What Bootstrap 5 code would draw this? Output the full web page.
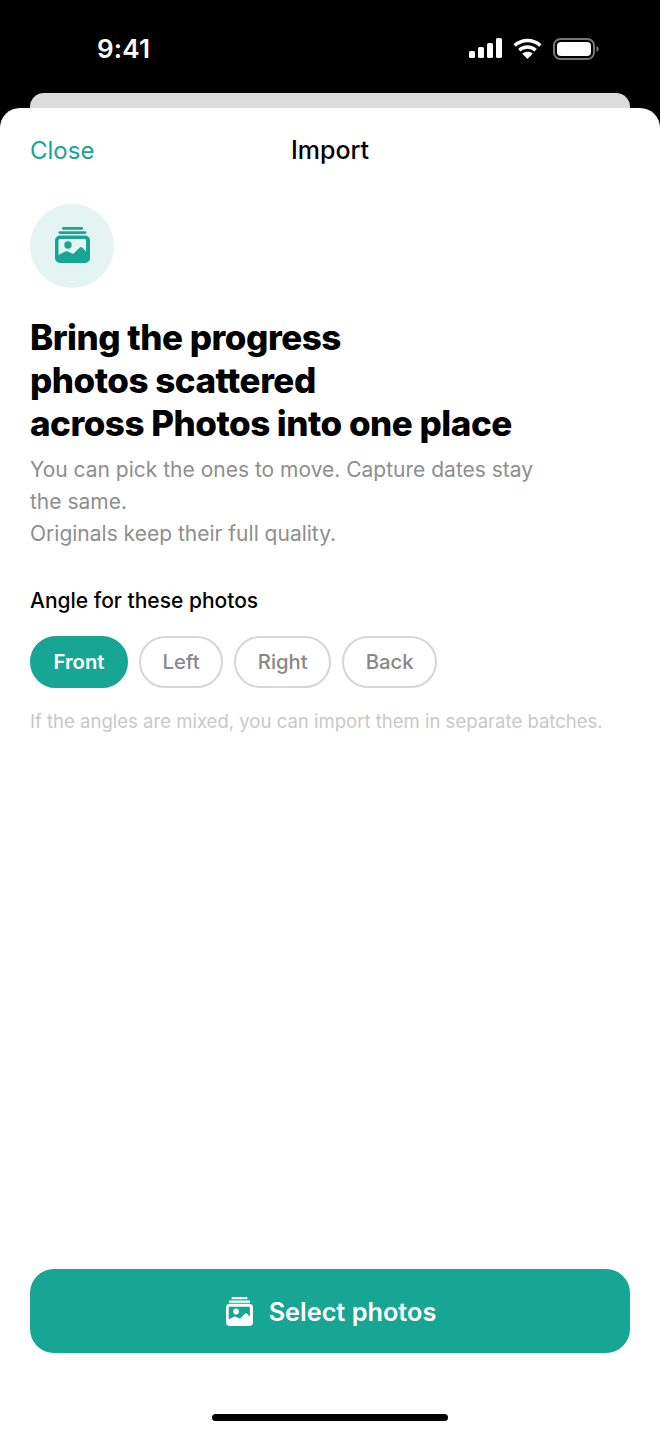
<!DOCTYPE html>
<html lang="en"><head><meta charset="utf-8"><title>Import</title>
<link rel="stylesheet" href="https://cdn.jsdelivr.net/npm/bootstrap@5.3.0/dist/css/bootstrap.min.css">
<style>
html,body{height:1434px;background:#000;font-family:Inter,"Liberation Sans",sans-serif;overflow:hidden}
.screen{width:660px;height:1434px}
.status-bar{height:93px;padding:4px 61px 0 97px;color:#fff}
.status-time{font-size:26px;font-weight:600;line-height:1;letter-spacing:.2px}
.status-icons{gap:11px}
.back-card{height:15px;margin:0 30px;background:#dcdcdc;border-radius:14px 14px 0 0}
.sheet{height:1326px;background:#fff;border-radius:20px 20px 0 0;padding:0 30px;color:#000}
.sheet-head{height:84px}
.close-link{font-size:24px;color:#17a594;text-decoration:none;left:0;top:27px;line-height:32px}
.sheet-title{font-size:25px;font-weight:500;line-height:32px}
.icon-disc{width:84px;height:84px;background:#e3f4f2;margin-top:12px}
.headline{font-size:35px;line-height:43px;font-weight:800;letter-spacing:-.49px;margin:28px 0 0}
.intro{font-size:21px;line-height:32px;color:#8e8e8e;margin:9px 0 0;width:530px}
.angle-label{font-size:21px;font-weight:500;line-height:28px;margin:37px 0 0}
.chips{gap:11px;margin-top:21px}
.chip{height:52px;padding:0 21.5px;font-size:20.3px;font-weight:500;line-height:1;border:2px solid #d6d6d6;color:#888;background:#fff;border-radius:26px}
.chip-on{background:#17a594;border-color:#17a594;color:#fff;font-weight:600}
.hint{font-size:18.55px;line-height:24px;color:#c8c8c8;margin:21px 0 0}
.cta{height:84px;padding:2px 0 0 2px;background:#17a594;border:0;color:#fff;font-size:25.3px;font-weight:600;border-radius:24px;gap:16px}
.home-bar{width:236px;height:7px;background:#000;margin:61px auto 0}
.sheet-foot{margin-top:auto;padding-bottom:13px}
.photo-ico{fill:#17a594;margin-top:-2px}
.cta .photo-ico{fill:#fff}
</style></head>
<body>
<div class="screen d-flex flex-column">
  <div class="status-bar d-flex justify-content-between align-items-center">
    <span class="status-time">9:41</span>
    <div class="status-icons d-flex align-items-center">
      <svg width="33" height="21" viewBox="0 0 33 21" fill="#fff"><rect x="0" y="13" width="6" height="7" rx="1.5"/><rect x="9" y="9" width="6" height="11" rx="1.5"/><rect x="18" y="5" width="6" height="15" rx="1.5"/><rect x="27" y="0" width="6" height="20" rx="1.5"/></svg>
      <svg width="29" height="21" viewBox="0 0 29 21"><path d="M1.6 7.6C9 .8 20 .8 27.4 7.6M6.3 12.2C10.900 8 18.100 8 22.700 12.200" fill="none" stroke="#fff" stroke-width="3.400"/><path d="M14.500 21L9.300 15.700C12.200 13.200 16.800 13.200 19.700 15.700Z" fill="#fff"/></svg>
      <svg width="46" height="22" viewBox="0 0 46 22"><rect x="1" y="1" width="40" height="20" rx="6.500" fill="none" stroke="#777" stroke-width="2"/><rect x="4" y="4" width="34" height="14" rx="4" fill="#fff"/><path d="M43.500 8v6c1.300-.4 2.200-1.600 2.200-3s-.9-2.600-2.200-3z" fill="#777"/></svg>
    </div>
  </div>
  <div class="back-card"></div>
  <main class="sheet d-flex flex-column">
    <header class="sheet-head position-relative d-flex justify-content-center align-items-center">
      <a class="close-link position-absolute" href="#">Close</a>
      <span class="sheet-title">Import</span>
    </header>
    <div class="icon-disc rounded-circle d-flex align-items-center justify-content-center">
      <svg class="photo-ico" width="35" height="36" viewBox="0 0 35 36"><rect x="7" y="0" width="21" height="2.800" rx="1.400"/><rect x="3.500" y="4.200" width="28" height="2.800" rx="1.400"/><path fill-rule="evenodd" d="M5 8.500h25a5 5 0 0 1 5 5V31a5 5 0 0 1-5 5H5a5 5 0 0 1-5-5V13.500a5 5 0 0 1 5-5zM5 12a1.500 1.500 0 0 0-1.500 1.500V28l5.500-3c1.800-.9 3.400-1 5 0l3 1.500c.8.400 1.400.3 2-.2l5.500-5.600c1-.9 2-.9 3 0l3.500 3.800v-11A1.500 1.500 0 0 0 30 12z"/><circle cx="13" cy="18" r="3.700"/></svg>
    </div>
    <h1 class="headline">Bring the progress<br>photos scattered<br>across Photos into one place</h1>
    <p class="intro">You can pick the ones to move. Capture dates stay the same.<br>Originals keep their full quality.</p>
    <p class="angle-label">Angle for these photos</p>
    <div class="chips d-flex">
      <button type="button" class="btn chip chip-on">Front</button>
      <button type="button" class="btn chip">Left</button>
      <button type="button" class="btn chip">Right</button>
      <button type="button" class="btn chip">Back</button>
    </div>
    <p class="hint">If the angles are mixed, you can import them in separate batches.</p>
    <div class="sheet-foot">
      <button type="button" class="btn cta w-100 d-flex align-items-center justify-content-center">
        <svg class="photo-ico" width="27" height="29" viewBox="0 0 35 36" preserveAspectRatio="none"><rect x="7" y="0" width="21" height="2.800" rx="1.400"/><rect x="3.500" y="4.200" width="28" height="2.800" rx="1.400"/><path fill-rule="evenodd" d="M5 8.500h25a5 5 0 0 1 5 5V31a5 5 0 0 1-5 5H5a5 5 0 0 1-5-5V13.500a5 5 0 0 1 5-5zM5 12a1.500 1.500 0 0 0-1.500 1.500V28l5.500-3c1.800-.9 3.400-1 5 0l3 1.500c.8.400 1.400.3 2-.2l5.500-5.600c1-.9 2-.9 3 0l3.500 3.800v-11A1.500 1.500 0 0 0 30 12z"/><circle cx="13" cy="18" r="3.700"/></svg>
        <span>Select photos</span>
      </button>
      <div class="home-bar rounded-pill"></div>
    </div>
  </main>
</div>
<script src="https://cdn.jsdelivr.net/npm/bootstrap@5.3.0/dist/js/bootstrap.bundle.min.js"></script>
</body></html>
